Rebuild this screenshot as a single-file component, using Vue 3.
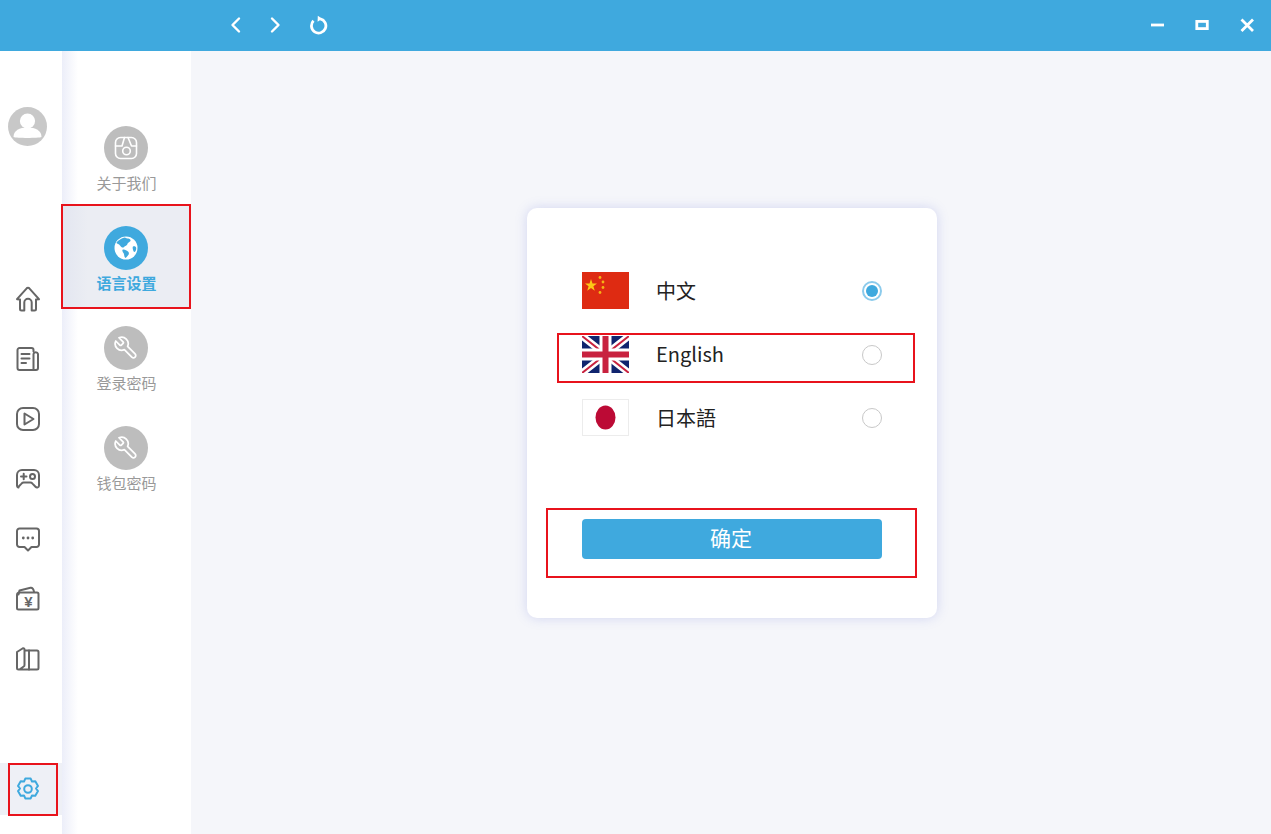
<template>
  <div class="app">
    <!-- 顶部栏 -->
    <header class="topbar">
      <div class="nav-btns">
        <svg class="bar-icon" viewBox="0 0 20 20"><path d="M13 3.500 6.500 10 13 16.500" /></svg>
        <svg class="bar-icon fwd" viewBox="0 0 20 20"><path d="M7 3.500 13.500 10 7 16.500" /></svg>
        <svg class="bar-icon reload" viewBox="0 0 20 20">
          <path class="ring" d="M5.500 5.800a7.200 7.200 0 1 0 6.800-2" />
          <path class="solid" d="M9.800 .8 14.200 3.800 9.600 6.800Z" />
        </svg>
      </div>
      <div class="win-btns">
        <svg class="bar-icon" viewBox="0 0 20 20"><path class="thick" d="M4 10h13" /></svg>
        <svg class="bar-icon" viewBox="0 0 20 20"><rect class="thick" x="4.800" y="6.400" width="10.500" height="7.200" /></svg>
        <svg class="bar-icon" viewBox="0 0 20 20"><path class="thick" d="M4.500 4.500 16 16M16 4.500 4.500 16" /></svg>
      </div>
    </header>

    <div class="body">
      <!-- 左侧图标栏 -->
      <aside class="rail">
        <svg class="avatar" viewBox="0 0 39 39">
          <circle cx="19.500" cy="19.500" r="19.500" fill="#c8c8c8" />
          <circle cx="19.500" cy="14" r="7.600" fill="#fff" />
          <path d="M5.500 30c0-6.500 6-9.500 14-9.500s14 3 14 9.500c-3 1.200-25 1.200-28 0Z" fill="#fff" />
        </svg>

        <div class="rail-list">
          <div v-for="icon in railIcons" :key="icon.name" class="rail-item">
            <svg class="rail-icon" viewBox="0 0 26 26">
              <path v-for="(d, i) in icon.paths" :key="i" :d="d" />
              <circle v-for="(c, i) in icon.dots || []" :key="'c' + i" :cx="c[0]" :cy="c[1]" :r="c[2]" :class="{ dot: c[3] }" />
              <text v-if="icon.name === 'wallet'" x="13.500" y="21" text-anchor="middle" class="yen">¥</text>
            </svg>
          </div>
        </div>

        <div class="rail-setting">
          <svg class="rail-icon blue" viewBox="0 0 26 26">
            <path d="M10.300 2.600h5.400l1.300 3 3.300-.4 2.700 4.700-2 2.600 2 2.600-2.700 4.700-3.300-.4-1.300 3h-5.400l-1.300-3-3.300.4-2.700-4.700 2-2.600-2-2.600 2.700-4.700 3.300.4Z" />
            <circle cx="13" cy="13" r="3.800" />
          </svg>
        </div>
      </aside>

      <!-- 设置菜单 -->
      <nav class="subnav">
        <div v-for="item in menu" :key="item.label" class="menu-item" :class="{ active: item.active }">
          <div class="menu-circle">
            <svg v-if="item.icon === 'about'" class="menu-icon" viewBox="0 0 26 26">
              <rect x="2.500" y="2.500" width="21" height="21" rx="5" />
              <path d="M11.500 2.500 9 11H2.500M15 2.500l3.500 8.500h5" />
              <circle cx="13.500" cy="16" r="3.800" />
            </svg>
            <svg v-else-if="item.icon === 'globe'" class="menu-icon globe" viewBox="0 0 26 26">
              <circle cx="13" cy="13" r="11.500" fill="#fff" />
              <path d="M12 2.500c2 1.500 5 .5 5.500 2.500s-2.500 2-3 4-2.500 1.500-3.500 3-3 0-4-1.500S4 9 3.500 8 9 2.500 12 2.500Z" fill="#3fa9de" />
              <path d="M10.500 14.500c2 0 3 1 4.500 2s1 3-.5 4.500-1.500 2.500-2.500 1.500-.5-3-1.500-4.500-2-3.500 0-3.500Z" fill="#3fa9de" />
              <path d="M20 11.500c1.500-.5 3 0 3.200 1.500s-.7 3.500-1.700 4-2.500-4.500-1.500-5.500Z" fill="#3fa9de" />
            </svg>
            <svg v-else class="menu-icon" viewBox="0 0 24 24">
              <path transform="matrix(-1 0 0 1 24 0)" d="M14.700 6.300a1 1 0 0 0 0 1.400l1.600 1.600a1 1 0 0 0 1.400 0l3.770-3.770a6 6 0 0 1-7.940 7.940l-6.910 6.910a2.120 2.120 0 0 1-3-3l6.910-6.910a6 6 0 0 1 7.940-7.940l-3.760 3.760z" />
            </svg>
          </div>
          <span class="menu-label">{{ item.label }}</span>
        </div>
      </nav>

      <!-- 语言选择 -->
      <main class="main">
        <section class="card">
          <div class="lang-list">
            <div v-for="lang in languages" :key="lang.code" class="lang-row" @click="current = lang.code">
              <svg v-if="lang.code === 'zh'" class="flag" viewBox="0 0 47 37">
                <rect width="47" height="37" fill="#de2b12" />
                <polygon points="9,7 10.500,11.500 15,11.500 11.400,14.300 12.800,18.800 9,16 5.200,18.800 6.600,14.300 3,11.500 7.500,11.500" fill="#fcc716" />
                <circle cx="18" cy="5.500" r="1.400" fill="#f5b316" />
                <circle cx="21" cy="10" r="1.400" fill="#f5b316" />
                <circle cx="21" cy="15.500" r="1.400" fill="#f5b316" />
                <circle cx="18" cy="20.500" r="1.400" fill="#f5b316" />
              </svg>
              <svg v-else-if="lang.code === 'en'" class="flag" viewBox="0 0 47 37">
                <rect width="47" height="37" fill="#10246e" />
                <path d="M0 0 47 37M47 0 0 37" stroke="#fff" stroke-width="7" />
                <path d="M0 0 47 37M47 0 0 37" stroke="#c8223f" stroke-width="2" />
                <path d="M23.500 0v37M0 18.500h47" stroke="#fff" stroke-width="12" />
                <path d="M23.500 0v37M0 18.500h47" stroke="#c8223f" stroke-width="6" />
              </svg>
              <svg v-else class="flag" viewBox="0 0 47 37">
                <rect x=".5" y=".5" width="46" height="36" fill="#fff" stroke="#ececec" />
                <ellipse cx="23.500" cy="18.500" rx="10" ry="12" fill="#bc0a35" />
              </svg>
              <span class="lang-name">{{ lang.name }}</span>
              <span class="radio" :class="{ checked: current === lang.code }"></span>
            </div>
          </div>
          <button class="confirm">确定</button>
        </section>
      </main>
    </div>

    <!-- 红色标注框 -->
    <div class="mark mark-setting"></div>
    <div class="mark mark-menu"></div>
    <div class="mark mark-english"></div>
    <div class="mark mark-confirm"></div>
  </div>
</template>

<script setup>
import { ref } from 'vue'

const current = ref('zh')

const railIcons = [
  { name: 'home', paths: ['M2 13.200 11.700 2.300a1.800 1.800 0 0 1 2.600 0L24 13.200l-3 .3v9.500a1.500 1.500 0 0 1-1.500 1.500h-2.800v-8a3.700 3.700 0 0 0-7.400 0v8H6.500A1.500 1.500 0 0 1 5 23v-9.500Z'] },
  { name: 'news', paths: ['M18.500 5.500V4A2 2 0 0 0 16.500 2H4.500a2 2 0 0 0-2 2v18a2 2 0 0 0 2 2h16.500a2 2 0 0 0 2-2V8a2.300 2.300 0 0 0-4.500 0v16', 'M6.500 8h8M6.500 12.500h8M6.500 17h4.500'] },
  { name: 'play', paths: ['M8 2h10a6 6 0 0 1 6 6v10a6 6 0 0 1-6 6H8a6 6 0 0 1-6-6V8a6 6 0 0 1 6-6Z', 'M9.500 7.500v11l9-5.500Z'] },
  {
    name: 'game',
    paths: [
      'M7 4h12a5 5 0 0 1 5 5v10.500c0 2-2.200 2.700-3.500 1.300l-3-3.200a3 3 0 0 0-2.300-1h-6.400a3 3 0 0 0-2.300 1l-3 3.200C4.200 22.200 2 21.500 2 19.500V9a5 5 0 0 1 5-5Z',
      'M6 10.500h5.500M8.700 7.800v5.400'
    ],
    dots: [[17.500, 10.500, 2.500]]
  },
  {
    name: 'chat',
    paths: ['M4.500 2.500h17a2.500 2.500 0 0 1 2.500 2.500v13.500a2.500 2.500 0 0 1-2.500 2.500h-5L13 24.500 9.500 21h-5A2.500 2.500 0 0 1 2 18.500V5a2.500 2.500 0 0 1 2.500-2.500Z'],
    dots: [[8.300, 12, 1.400, true], [13, 12, 1.400, true], [17.700, 12, 1.400, true]]
  },
  { name: 'wallet', paths: ['M3.500 8.500 4.500 4.500 15.500 1.800c1.800-.4 3 1.500 3.500 4', 'M4.500 6.500h17.500a1.500 1.500 0 0 1 1.500 1.500v14a1.500 1.500 0 0 1-1.500 1.500H3.500A1.500 1.500 0 0 1 2 22V9a2.500 2.500 0 0 1 2.500-2.500Z'] },
  { name: 'book', paths: ['M9.500 4.500h12.500a1.500 1.500 0 0 1 1.500 1.500v16a1.500 1.500 0 0 1-1.500 1.500H3.500A1.500 1.500 0 0 1 2 22V6l5.500-3.500C8.500 2 9.500 2.500 9.500 3.500v15.500c0 .7-.3 1.200-.8 1.500l-4.200 3', 'M14 4.500v19'] }
]

const menu = [
  { label: '关于我们', icon: 'about' },
  { label: '语言设置', icon: 'globe', active: true },
  { label: '登录密码', icon: 'wrench' },
  { label: '钱包密码', icon: 'wrench' }
]

const languages = [
  { code: 'zh', name: '中文' },
  { code: 'en', name: 'English' },
  { code: 'ja', name: '日本語' }
]
</script>

<style>
html,
body {
  margin: 0;
  background: #f5f6fa;
}
</style>

<style scoped>
.app {
  position: relative;
  width: 1271px;
  height: 834px;
  overflow: hidden;
  font-family: "Noto Sans CJK SC", "Noto Sans", sans-serif;
}

/* 顶部栏 */
.topbar {
  height: 51px;
  background: #3fa9de;
  display: flex;
  align-items: center;
  justify-content: space-between;
  padding: 0 14px 0 226px;
}

.nav-btns,
.win-btns {
  display: flex;
  align-items: center;
  margin-top: -2px;
}

.win-btns {
  gap: 25px;
}

.bar-icon {
  width: 20px;
  height: 20px;
  fill: none;
  stroke: #fff;
  stroke-width: 2.400;
  stroke-linecap: round;
  stroke-linejoin: round;
}

.bar-icon .thick {
  stroke-width: 2.800;
  stroke-linecap: butt;
  stroke-linejoin: miter;
}

.bar-icon .ring {
  stroke-width: 2.800;
  stroke-linecap: butt;
}

.bar-icon .solid {
  fill: #fff;
  stroke: none;
}

.fwd {
  margin-left: 19px;
}

.reload {
  margin-left: 23px;
}

.body {
  display: flex;
  height: 783px;
}

/* 左侧图标栏 */
.rail {
  width: 62px;
  flex: none;
  background: #fff;
  display: flex;
  flex-direction: column;
  align-items: center;
}

.avatar {
  width: 39px;
  height: 39px;
  margin: 56px 8px 0 0;
}

.rail-list {
  margin-top: 140px;
  display: flex;
  flex-direction: column;
  gap: 34px;
}

.rail-item {
  height: 26px;
  margin-right: 7px;
}

.rail-icon {
  display: block;
  width: 26px;
  height: 26px;
  fill: none;
  stroke: #666;
  stroke-width: 2;
  stroke-linecap: round;
  stroke-linejoin: round;
}

.rail-icon .dot {
  fill: #666;
  stroke: none;
}

.rail-icon .yen {
  font-size: 15px;
  font-weight: 700;
  fill: #666;
  stroke: none;
  font-family: "Liberation Sans", sans-serif;
}

.rail-icon.blue {
  stroke: #3fa9de;
}

.rail-setting {
  margin-top: 91px;
  width: 62px;
  height: 52px;
  background: #eef0f6;
  display: flex;
  align-items: center;
  justify-content: center;
  padding-right: 7px;
  box-sizing: border-box;
}

/* 设置菜单 */
.subnav {
  width: 129px;
  flex: none;
  background: linear-gradient(90deg, #eceef9, #fff 16px);
  padding-top: 53px;
  box-sizing: border-box;
}

.menu-item {
  height: 100px;
  display: flex;
  flex-direction: column;
  align-items: center;
  padding: 22px 2px 0 0;
  box-sizing: border-box;
}

.menu-item.active {
  height: 105px;
  margin-bottom: -5px;
  background: linear-gradient(90deg, #e3e6f1, #ebedf3 26px);
}

.menu-circle {
  width: 44px;
  height: 44px;
  border-radius: 50%;
  background: #bdbdbd;
  display: flex;
  align-items: center;
  justify-content: center;
}

.active .menu-circle {
  background: #3fa9de;
}

.menu-icon {
  width: 26px;
  height: 26px;
  fill: none;
  stroke: #fff;
  stroke-width: 1.600;
  stroke-linecap: round;
  stroke-linejoin: round;
}

.menu-icon.globe {
  stroke: none;
}

.menu-label {
  margin: 3px 0 0 2px;
  font-size: 15px;
  line-height: 20px;
  color: #999;
}

.active .menu-label {
  color: #3fa9de;
  font-weight: 700;
}

/* 语言选择 */
.main {
  flex: 1;
  background: #f5f6fa;
  display: flex;
  justify-content: center;
  align-items: flex-start;
  padding: 157px 0 0 2px;
  box-sizing: border-box;
}

.card {
  width: 410px;
  height: 410px;
  background: #fff;
  border-radius: 10px;
  box-shadow: 0 0 12px rgba(120, 130, 220, 0.28);
  padding: 64px 55px 0;
  box-sizing: border-box;
}

.lang-list {
  display: flex;
  flex-direction: column;
  gap: 25.500px;
}

.lang-row {
  height: 38px;
  display: flex;
  align-items: center;
  cursor: pointer;
}

.flag {
  width: 47px;
  height: 37px;
  flex: none;
  align-self: flex-start;
}

.lang-name {
  margin: -2px 0 0 27px;
  flex: 1;
  font-size: 20px;
  color: #222;
}

.radio {
  width: 20px;
  height: 20px;
  border: 1px solid #c8c8c8;
  border-radius: 50%;
  box-sizing: border-box;
  position: relative;
}

.radio.checked {
  border: 2px solid #8ccbec;
}

.radio.checked::after {
  content: "";
  position: absolute;
  inset: 2px;
  border-radius: 50%;
  background: #3fa9de;
}

.confirm {
  display: block;
  width: 300px;
  height: 40px;
  margin-top: 81.500px;
  padding: 0 2px 4px 0;
  border: none;
  border-radius: 4px;
  background: #3fa9de;
  color: #fff;
  font-family: inherit;
  font-size: 21px;
  cursor: pointer;
}

/* 红色标注框 */
.mark {
  position: absolute;
  border: 2px solid #e8131c;
  box-sizing: border-box;
  pointer-events: none;
}

.mark-setting {
  left: 8px;
  top: 763px;
  width: 50px;
  height: 53px;
}

.mark-menu {
  left: 61px;
  top: 204px;
  width: 130px;
  height: 105px;
}

.mark-english {
  left: 557px;
  top: 333px;
  width: 358px;
  height: 50px;
}

.mark-confirm {
  left: 546px;
  top: 508px;
  width: 371px;
  height: 70px;
}
</style>
